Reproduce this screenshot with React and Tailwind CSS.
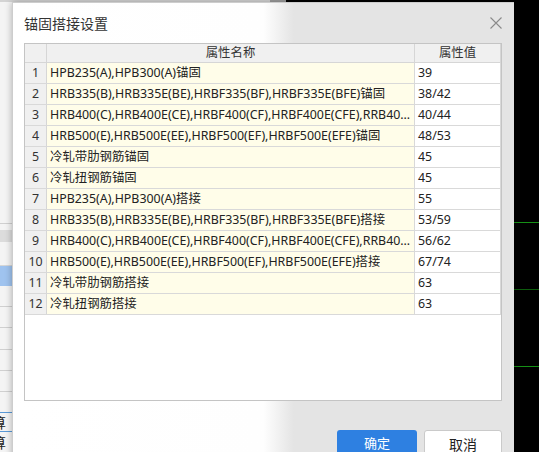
import React from "react";

const rows = [
  ["HPB235(A),HPB300(A)锚固", "39"],
  ["HRB335(B),HRB335E(BE),HRBF335(BF),HRBF335E(BFE)锚固", "38/42"],
  ["HRB400(C),HRB400E(CE),HRBF400(CF),HRBF400E(CFE),RRB400(D)锚固", "40/44"],
  ["HRB500(E),HRB500E(EE),HRBF500(EF),HRBF500E(EFE)锚固", "48/53"],
  ["冷轧带肋钢筋锚固", "45"],
  ["冷轧扭钢筋锚固", "45"],
  ["HPB235(A),HPB300(A)搭接", "55"],
  ["HRB335(B),HRB335E(BE),HRBF335(BF),HRBF335E(BFE)搭接", "53/59"],
  ["HRB400(C),HRB400E(CE),HRBF400(CF),HRBF400E(CFE),RRB400(D)搭接", "56/62"],
  ["HRB500(E),HRB500E(EE),HRBF500(EF),HRBF500E(EFE)搭接", "67/74"],
  ["冷轧带肋钢筋搭接", "63"],
  ["冷轧扭钢筋搭接", "63"],
];

const font = { fontFamily: '"Noto Sans", "Noto Sans CJK SC", sans-serif' };

// app behind the dialog, only a sliver of it shows on the left
const BackPanel = () => (
  <div className="w-[286px] h-full flex flex-col bg-[#f4f4f4]">
    <div className="h-[2px] flex">
      <div className="w-[270px] bg-[#d4d4d4]"></div>
      <div className="flex-1 bg-[#9c9c9c]"></div>
    </div>
    <div className="h-[223px] border-b border-[#d0d0d0]"></div>
    <div className="h-[6px]"></div>
    <div className="h-[12px] bg-[#dcdcdc]"></div>
    <div className="h-[24px] border-b border-[#d6d6d6]"></div>
    <div className="h-[20px] bg-[#9fc3ef]"></div>
    <div className="h-[21px] border-b border-[#d0d0d0]"></div>
    <div className="h-[21px] border-b border-[#d0d0d0]"></div>
    <div className="h-[22px] border-b border-[#d0d0d0]"></div>
    <div className="h-[21px] border-b border-[#d0d0d0]"></div>
    <div className="h-[21px] border-b border-[#d0d0d0]"></div>
    <div className="h-[20px]"></div>
    <div className="h-[20px] border-y border-[#5a9ad8] flex items-center text-[14px] text-[#222] -ml-[8px]" style={font}>算</div>
    <div className="h-[20px] flex items-center text-[14px] text-[#222] -ml-[8px]" style={font}>算</div>
  </div>
);

const BlackSide = () => (
  <div className="flex-1 h-full bg-black flex flex-col">
    <div className="h-[222px]"></div>
    <div className="h-px bg-[#169016]"></div>
    <div className="h-[66px]"></div>
    <div className="h-px bg-[#0d5c0d]"></div>
    <div className="h-[76px]"></div>
    <div className="h-px bg-[#169016]"></div>
  </div>
);

const App = () => {
  return (
    <div className="relative w-[539px] h-[452px] overflow-hidden flex bg-black">
      <BackPanel />
      <BlackSide />

      <div
        className="absolute left-[12px] top-[2px] w-[502px] h-[470px] border-l border-t border-[#cdcdcd] shadow-[0_0_7px_rgba(0,0,0,0.3)] bg-[linear-gradient(90deg,#ffffff_0%,#fefefe_50%,#e4e4e4_56%,#e4e4e4_100%)] flex flex-col"
        style={font}
      >
        <div className="h-[40px] flex items-center justify-between pl-[11px] pr-[12px]">
          <span className="text-[14px] text-[#333]">锚固搭接设置</span>
          <svg width="12" height="12" viewBox="0 0 12 12" className="text-[#8a8a8a]">
            <path d="M0.5 0.5L11.5 11.5M11.5 0.5L0.5 11.5" stroke="currentColor" strokeWidth="1.1" fill="none" />
          </svg>
        </div>

        <div className="ml-[11px] w-[478px] h-[358px] border border-[#c4c4c4] bg-white flex flex-col text-[12.4px] text-[#222]">
          <div className="h-[19px] flex bg-[#f0f0f0] border-b border-[#d6d6d6] text-[#333]">
            <div className="w-[22px] border-r border-[#d6d6d6]"></div>
            <div className="w-[368px] border-r border-[#d6d6d6] flex items-center justify-center">属性名称</div>
            <div className="flex-1 border-r border-[#d6d6d6] flex items-center justify-center">属性值</div>
          </div>
          {rows.map(([name, val], i) => (
            <div key={i} className="h-[21px] flex border-b border-[#d9d9d9]">
              <div className="w-[22px] shrink-0 border-r border-[#d6d6d6] bg-[#f0f0f0] flex items-center justify-center text-[#333]">
                {i + 1}
              </div>
              <div className="w-[368px] shrink-0 border-r border-[#d9d9d9] bg-[#fffde9] flex items-center pl-[3px] pr-[2px] min-w-0 overflow-hidden">
                <span className="block min-w-0 truncate">{name}</span>
              </div>
              <div className="flex-1 border-r border-[#d9d9d9] flex items-center pl-[3px]">{val}</div>
            </div>
          ))}
        </div>

        <div className="flex justify-end gap-[7px] mt-[29px] pr-[12px]">
          <button className="w-[80px] h-[28px] rounded-[3px] bg-[#2e80e1] text-white text-[13px]">确定</button>
          <button className="w-[78px] h-[28px] rounded-[3px] bg-white border border-[#cacaca] text-[#222] text-[14px]">取消</button>
        </div>
      </div>
    </div>
  );
};

export default App;
